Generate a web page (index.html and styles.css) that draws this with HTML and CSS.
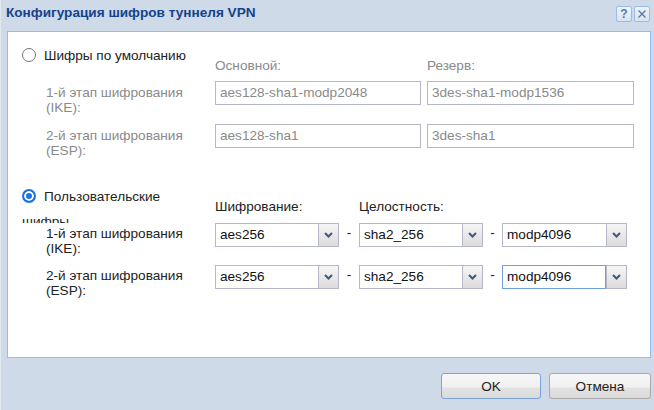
FILE: index.html
```html
<!DOCTYPE html>
<html lang="ru">
<head>
<meta charset="utf-8">
<title>Конфигурация шифров туннеля VPN</title>
<link rel="stylesheet" href="styles.css">
</head>
<body>
<div class="window">
  <div class="titlebar">
    <span class="title">Конфигурация шифров туннеля VPN</span>
    <div class="tools">
      <span class="tool tool-help">?</span>
      <span class="tool"><svg width="10" height="10" viewBox="0 0 10 10"><path d="M1.5 1.5 L8.5 8.5 M8.5 1.5 L1.5 8.5" stroke="#5a7aa5" stroke-width="1.4" fill="none"/></svg></span>
    </div>
  </div>

  <div class="panel">
    <section class="group">
      <div class="row">
        <div class="col-left">
          <label class="radio-label"><span class="radio"></span>Шифры по умолчанию</label>
        </div>
        <span class="head head-wide disabled">Основной:</span>
        <span class="head head-wide disabled">Резерв:</span>
      </div>
      <div class="row row-field row-first">
        <div class="row-label disabled">1-й этап шифрования<br>(IKE):</div>
        <div class="fields">
          <div class="textbox">aes128-sha1-modp2048</div>
          <div class="textbox textbox-wide">3des-sha1-modp1536</div>
        </div>
      </div>
      <div class="row row-field row-second">
        <div class="row-label disabled">2-й этап шифрования<br>(ESP):</div>
        <div class="fields">
          <div class="textbox">aes128-sha1</div>
          <div class="textbox textbox-wide">3des-sha1</div>
        </div>
      </div>
    </section>

    <section class="group group-custom">
      <div class="row">
        <div class="col-left">
          <label class="radio-label radio-label-clip"><span class="radio checked"></span>Пользовательские шифры</label>
        </div>
        <span class="head head-narrow">Шифрование:</span>
        <span class="head head-narrow">Целостность:</span>
      </div>
      <div class="row row-field">
        <div class="row-label row-label-custom">1-й этап шифрования<br>(IKE):</div>
        <div class="select"><span class="select-input">aes256</span><span class="select-trigger"><svg width="9" height="6" viewBox="0 0 9 6"><path d="M1 1 L4.5 4.5 L8 1" stroke="#3a5a8e" stroke-width="2" fill="none"/></svg></span></div>
        <span class="dash">-</span>
        <div class="select"><span class="select-input">sha2_256</span><span class="select-trigger"><svg width="9" height="6" viewBox="0 0 9 6"><path d="M1 1 L4.5 4.5 L8 1" stroke="#3a5a8e" stroke-width="2" fill="none"/></svg></span></div>
        <span class="dash dash-narrow">-</span>
        <div class="select select-last"><span class="select-input">modp4096</span><span class="select-trigger"><svg width="9" height="6" viewBox="0 0 9 6"><path d="M1 1 L4.5 4.5 L8 1" stroke="#3a5a8e" stroke-width="2" fill="none"/></svg></span></div>
      </div>
      <div class="row row-field row-select-second">
        <div class="row-label row-label-custom">2-й этап шифрования<br>(ESP):</div>
        <div class="select"><span class="select-input">aes256</span><span class="select-trigger"><svg width="9" height="6" viewBox="0 0 9 6"><path d="M1 1 L4.5 4.5 L8 1" stroke="#3a5a8e" stroke-width="2" fill="none"/></svg></span></div>
        <span class="dash">-</span>
        <div class="select"><span class="select-input">sha2_256</span><span class="select-trigger"><svg width="9" height="6" viewBox="0 0 9 6"><path d="M1 1 L4.5 4.5 L8 1" stroke="#3a5a8e" stroke-width="2" fill="none"/></svg></span></div>
        <span class="dash dash-narrow">-</span>
        <div class="select select-last select-focus"><span class="select-input">modp4096</span><span class="select-trigger"><svg width="9" height="6" viewBox="0 0 9 6"><path d="M1 1 L4.5 4.5 L8 1" stroke="#3a5a8e" stroke-width="2" fill="none"/></svg></span></div>
      </div>
    </section>
  </div>

  <div class="footer">
    <button class="btn btn-ok">OK</button>
    <button class="btn btn-cancel">Отмена</button>
  </div>
</div>
</body>
</html>
```

FILE: styles.css
```css
* { box-sizing: border-box; }
html, body { margin: 0; padding: 0; }
body {
  width: 654px;
  height: 410px;
  overflow: hidden;
  background: #cedae7;
  font-family: "Liberation Sans", Arial, sans-serif;
  font-size: 13.6px;
  color: #222;
}
.window {
  height: 410px;
  border-left: 1px solid #e3e9f0;
  display: flex;
  flex-direction: column;
}
.titlebar {
  height: 31px;
  flex: none;
  display: flex;
  align-items: flex-start;
  padding: 5px 4px 0 5px;
}
.title {
  font-weight: bold;
  color: #15428b;
  line-height: 16px;
  font-size: 13.6px;
}
.tools {
  margin-left: auto;
  display: flex;
  gap: 2px;
  margin-top: 1px;
}
.tool {
  width: 16px;
  height: 16px;
  border: 1px solid #99bbe8;
  border-radius: 2px;
  background: linear-gradient(#eef3fa, #d8e3f1);
  display: flex;
  align-items: center;
  justify-content: center;
}
.tool-help {
  color: #5a7aa5;
  font-weight: bold;
  font-size: 12px;
  line-height: 14px;
}
.panel {
  flex: none;
  margin-left: 6px;
  width: 644px;
  height: 327px;
  background: #fff;
  border: 1px solid #99bbe8;
  padding: 11px 0 0 14px;
}
.row {
  display: flex;
  align-items: flex-start;
}
.col-left {
  width: 193px;
  flex: none;
}
.radio-label {
  display: block;
  width: 175px;
  line-height: 25px;
}
.radio-label-clip {
  height: 39px;
  overflow: hidden;
}
.radio {
  display: inline-block;
  width: 14px;
  height: 14px;
  border: 1px solid #767676;
  border-radius: 50%;
  background: #fff;
  vertical-align: middle;
  margin: -2px 8px 0 0;
}
.radio.checked {
  border: 2px solid #1a73e8;
  background: #1a73e8;
  box-shadow: inset 0 0 0 2px #fff;
}
.head {
  flex: none;
  line-height: 15px;
  padding-top: 15px;
}
.head-wide { width: 212px; }
.head-narrow { width: 144px; }
.disabled { color: #8a8a8a; }

.row-field { height: 24px; }
.row-first { margin-top: 8px; }
.row-second { margin-top: 19px; }
.row-label {
  width: 193px;
  flex: none;
  padding: 4px 0 0 24px;
  line-height: 15px;
}
.row-label-custom { padding-top: 3px; }
.fields {
  display: flex;
  gap: 6px;
}
.textbox {
  width: 206px;
  height: 24px;
  border: 1px solid #b5b8c8;
  padding-left: 4px;
  line-height: 22px;
  color: #8a8a8a;
  white-space: nowrap;
}
.textbox-wide { width: 207px; }

.group-custom { margin-top: 36px; }
.row-select-second { margin-top: 18px; }
.select {
  display: flex;
  width: 124px;
  height: 24px;
  flex: none;
}
.select-last { width: 125px; }
.select-input {
  flex: 1;
  border: 1px solid #b5b8c8;
  border-right: 0;
  padding-left: 4px;
  line-height: 22px;
  color: #111;
  white-space: nowrap;
}
.select-trigger {
  width: 21px;
  flex: none;
  border: 1px solid #b5b8c8;
  background: linear-gradient(#f5f5f5, #dcdcdc);
  display: flex;
  align-items: center;
  justify-content: center;
}
.select-focus .select-input {
  border: 1px solid #6f9fdc;
}
.dash {
  width: 20px;
  flex: none;
  text-align: center;
  line-height: 20px;
}
.dash-narrow { width: 19px; }

.footer {
  display: flex;
  justify-content: flex-end;
  gap: 8px;
  padding: 15px 3px 0 0;
}
.btn {
  height: 26px;
  border: 1px solid #a9a9a9;
  border-radius: 3px;
  background: linear-gradient(#f7f7f7 0%, #f0f0f0 55%, #e2e2e2 58%, #dadada 100%);
  font-family: "Liberation Sans", Arial, sans-serif;
  font-size: 13.6px;
  color: #222;
  padding: 0;
}
.btn-ok { width: 100px; border-color: #7aa3d9; }
.btn-cancel { width: 102px; }
```
